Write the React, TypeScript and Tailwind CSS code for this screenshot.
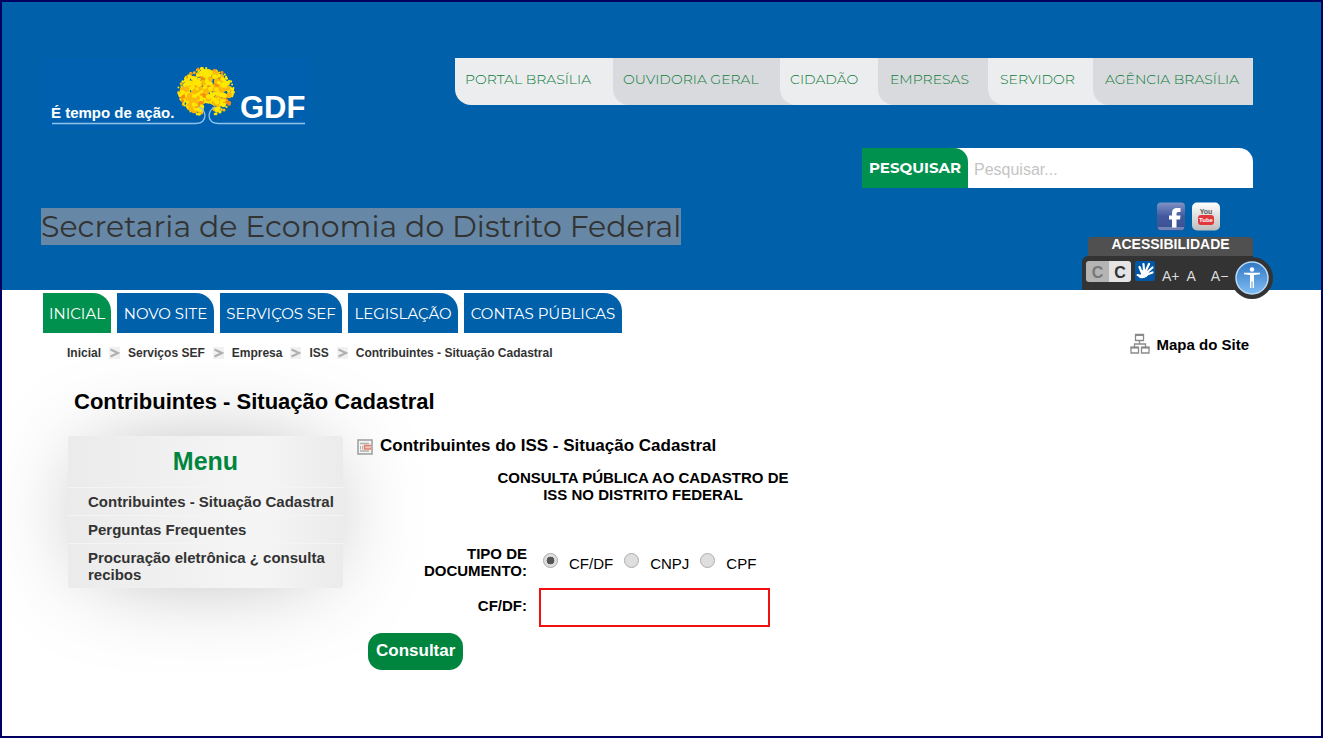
const topLinks = [
  { label: 'PORTAL BRASÍLIA', item: 'grow-[158] bg-transparent', link: 'bg-[#ebedef] pl-[10px] rounded-bl-[16px]' },
  { label: 'OUVIDORIA GERAL', item: 'grow-[167] bg-[#ebedef]', link: 'bg-[#d8dade] pl-[10px] rounded-bl-[16px]' },
  { label: 'CIDADÃO', item: 'grow-[98] bg-[#d8dade]', link: 'bg-[#ebedef] pl-[10px] rounded-bl-[16px]' },
  { label: 'EMPRESAS', item: 'grow-[110] bg-[#ebedef]', link: 'bg-[#d8dade] pl-3 rounded-bl-[16px]' },
  { label: 'SERVIDOR', item: 'grow-[105] bg-[#d8dade]', link: 'bg-[#ebedef] pl-3 rounded-bl-[16px]' },
  { label: 'AGÊNCIA BRASÍLIA', item: 'grow-[160] bg-[#ebedef]', link: 'bg-[#d8dade] pl-3 rounded-bl-[16px]' },
];

const tabs = [
  { label: 'INICIAL', className: 'w-[68px] bg-[#00914e]' },
  { label: 'NOVO SITE', className: 'w-[97px] bg-[#0060aa]' },
  { label: 'SERVIÇOS SEF', className: 'w-[122px] bg-[#0060aa]' },
  { label: 'LEGISLAÇÃO', className: 'w-[110px] bg-[#0060aa]' },
  { label: 'CONTAS PÚBLICAS', className: 'w-[158px] bg-[#0060aa]' },
];

const crumbs = ['Inicial', 'Serviços SEF', 'Empresa', 'ISS', 'Contribuintes - Situação Cadastral'];

const menuItems = [
  'Contribuintes - Situação Cadastral',
  'Perguntas Frequentes',
  'Procuração eletrônica ¿ consulta recibos',
];

const docTypes = ['CF/DF', 'CNPJ', 'CPF'];

// repeatable noise in 0..1
const noise = (n: number) => {
  const s = Math.sin(n * 12.9898) * 43758.5453;
  return s - Math.floor(s);
};

// blossoms of the tree, scattered over the crown
const blossoms = Array.from({ length: 420 }, (_, i) => {
  const angle = noise(i + 1) * Math.PI * 2;
  const dist = Math.sqrt(noise(i * 1.7 + 500));
  const tone = noise(i * 2.3 + 900);
  return {
    x: 163 + Math.cos(angle) * dist * 28,
    y: 34 + Math.sin(angle) * dist * 24,
    r: dist > 0.88 ? 0.9 + tone * 0.7 : 1.6 + tone * 1.2,
    fill: tone > 0.92 ? '#f78a10' : tone > 0.74 ? '#fbb80c' : '#ffe800',
  };
}).filter((b) => !(Math.abs(b.x - 165) < 6 && b.y > 45));

function Logo() {
  return (
    <svg width="266" height="74" viewBox="0 0 266 74" role="img" aria-label="É tempo de ação. GDF">
      <rect width="266" height="72" fill="#0060b0" />
      <g fill="#fff" fontFamily="'Liberation Sans', Arial, sans-serif" fontWeight="700">
        <text x="8" y="60" fontSize="15">É tempo de ação.</text>
        <text x="197" y="60" fontSize="31">GDF</text>
      </g>
      {blossoms.map((b, i) => (
        <circle key={i} cx={b.x} cy={b.y} r={b.r} fill={b.fill} />
      ))}
      <g fill="none" stroke="#8fc3ea" strokeWidth="1.3">
        <path d="M9 65.500H153Q162 65 162 57Q161 51 156 49" />
        <path d="M262 65.500H175Q166 65 166 57Q167 51 172 49" />
      </g>
    </svg>
  );
}

function FacebookIcon() {
  return (
    <svg width="28" height="29" viewBox="0 0 28 29" aria-hidden="true">
      <defs>
        <linearGradient id="fb" x1="0" y1="0" x2="0" y2="1">
          <stop offset="0" stopColor="#7f93c6" />
          <stop offset="0.5" stopColor="#41599f" />
          <stop offset="1" stopColor="#3a5091" />
        </linearGradient>
      </defs>
      <rect y="0.500" width="28" height="28" rx="4" fill="url(#fb)" />
      <path d="M15 26V17.500H12V13.500H15V11Q15 6 20 6H23.500V10H21Q19.500 10 19.500 11.500V13.500H23.500L23 17.500H19.500V26Z" fill="#fff" />
      <path d="M1 25H27V26.500Q26 28 24 28H4Q2 28 1 26.500Z" fill="#93a5d0" opacity="0.6" />
    </svg>
  );
}

function YoutubeIcon() {
  return (
    <svg width="28" height="29" viewBox="0 0 28 29" aria-hidden="true">
      <defs>
        <linearGradient id="yt" x1="0" y1="0" x2="0" y2="1">
          <stop offset="0" stopColor="#fff" />
          <stop offset="1" stopColor="#bdbdbd" />
        </linearGradient>
      </defs>
      <rect y="0.500" width="28" height="28" rx="5" fill="url(#yt)" />
      <rect x="6" y="13" width="16" height="10" rx="3" fill="#e0383c" />
      <g fontFamily="'Liberation Sans', Arial, sans-serif" fontWeight="700" textAnchor="middle">
        <text x="14" y="12" fontSize="7" fill="#555">You</text>
        <text x="14" y="20" fontSize="6" fill="#fff">Tube</text>
      </g>
    </svg>
  );
}

function HandsIcon() {
  return (
    <svg width="20" height="20" viewBox="0 0 20 20" aria-hidden="true">
      <rect width="20" height="20" rx="2" fill="#0057a8" />
      <g stroke="#fff" strokeLinecap="round" fill="none">
        <path d="M6.500 11L4.500 6M9 9.500L8.500 3M11 9.500L14 3M12 11.500L17.500 6.500M12 13.500L17.500 11.500" strokeWidth="2.2" />
        <path d="M2.500 14L7 15" strokeWidth="2" />
      </g>
      <path d="M6 10Q10 7.500 13 10.500Q14.500 13 12 15.500Q9 18 5 17L3 15.500L6 13.500Z" fill="#fff" />
    </svg>
  );
}

function AccessIcon() {
  return (
    <svg width="42" height="42" viewBox="0 0 42 42" aria-hidden="true">
      <defs>
        <linearGradient id="acc" x1="0" y1="0" x2="0" y2="1">
          <stop offset="0" stopColor="#2f78c4" />
          <stop offset="1" stopColor="#7fbcf2" />
        </linearGradient>
      </defs>
      <circle cx="21" cy="21" r="21" fill="#333" />
      <circle cx="21" cy="21" r="16" fill="url(#acc)" stroke="#b9daf5" strokeWidth="1.5" />
      <circle cx="21" cy="12.500" r="2.200" fill="#fff" />
      <path d="M13 15.800H29V17.200L23 18V31H21.600V24.500H20.400V31H19V18L13 17.200Z" fill="#fff" />
    </svg>
  );
}

function SitemapIcon() {
  return (
    <svg width="20" height="21" viewBox="0 0 20 21" fill="none" stroke="#8a8a8a" className="-mt-1" aria-hidden="true">
      <path d="M5.500 1.500H13.500V7.500H5.500ZM1 14.500H8.500V20H1ZM11.500 14.500H19V20H11.500Z" strokeWidth="1.3" />
      <path d="M5 2H14M0.500 14.500H9M11 14.500H19.500" strokeWidth="2" />
      <path d="M9.500 7.500V11M4.500 14V11H15.500V14" strokeWidth="1.3" />
    </svg>
  );
}

function FormIcon() {
  return (
    <svg width="16" height="16" viewBox="0 0 16 16" fill="none" className="mt-[2px]" aria-hidden="true">
      <rect x="1" y="1" width="14" height="14" fill="#f4f4f4" stroke="#9c9c9c" strokeWidth="1.500" />
      <path d="M3 4.500H12M3 12H12" stroke="#b0b0b0" strokeWidth="1.500" />
      <path d="M3.500 7V10.500M5.500 7V10.500" stroke="#b0b0b0" />
      <path d="M14 6.500H7.500V10H14" fill="#f3c4b8" stroke="#e0806a" strokeWidth="1.500" />
    </svg>
  );
}

function Chevron() {
  return (
    <svg width="11" height="12" viewBox="0 0 11 12" className="bg-[#f1f1f1]" aria-hidden="true">
      <path d="M1.500 2.500L9 6L1.500 9.500" fill="none" stroke="#b0b0b0" strokeWidth="2" />
    </svg>
  );
}

function TopNav() {
  return (
    <nav className="w-[798px]" aria-label="Portais">
      <ul className="flex">
        {topLinks.map((l) => (
          <li key={l.label} className={`basis-0 ${l.item}`}>
            <a
              href="#"
              className={`block h-[47px] whitespace-nowrap font-['Montserrat','Inter',sans-serif] text-sm font-light leading-[42px] text-[#0f7a3a] ${l.link}`}
            >
              {l.label}
            </a>
          </li>
        ))}
      </ul>
    </nav>
  );
}

function Accessibility() {
  return (
    <section className="relative mt-[6px] w-[171px]" aria-label="Acessibilidade">
      <h2 className="ml-[6px] h-[19px] rounded-t-[4px] bg-[#505050] text-center text-sm font-bold leading-[14px] text-white">
        ACESSIBILIDADE
      </h2>
      <div className="flex h-[34px] items-center rounded-tl-[6px] bg-[#333] pb-1 pl-1 text-[#ddd]">
        <button type="button" aria-label="Baixo contraste" className="h-[21px] w-[23px] rounded-l-[3px] bg-[#b4b4b4] font-bold text-[#777]">C</button>
        <button type="button" aria-label="Alto contraste" className="h-[21px] w-[22px] rounded-r-[3px] bg-[#e4e4e4] font-bold text-[#333]">C</button>
        <button type="button" aria-label="Libras" className="ml-1"><HandsIcon /></button>
        <button type="button" className="ml-[7px] pt-[10px] text-sm">A+</button>
        <button type="button" className="ml-[7px] pt-[10px] text-sm">A</button>
        <button type="button" className="ml-[15px] pt-[10px] text-sm">A−</button>
      </div>
      <div className="absolute -right-5 top-5">
        <AccessIcon />
      </div>
    </section>
  );
}

function Header() {
  return (
    <header className="relative z-10 bg-[#0060aa] pl-[39px] pr-[68px] pt-14">
      <div className="flex items-start justify-between">
        <div className="pl-[2px]">
          <Logo />
        </div>
        <TopNav />
      </div>

      <div className="mt-4 flex items-start justify-between">
        <h1 className="mt-[60px] whitespace-nowrap bg-[#6688a6] font-['Montserrat','Inter',sans-serif] text-[30px] leading-[37px] text-[#333]">
          Secretaria de Economia do Distrito Federal
        </h1>

        <div className="flex flex-col items-end">
          <form className="flex h-10 w-[391px] rounded-tr-[14px] bg-white">
            <button
              type="button"
              className="w-[106px] rounded-tr-[14px] bg-[#00914e] font-['Montserrat','Inter',sans-serif] text-[15px] font-bold text-white"
            >
              PESQUISAR
            </button>
            <input
              type="text"
              aria-label="Pesquisar"
              placeholder="Pesquisar..."
              className="min-w-0 flex-1 px-[6px] pt-[3px] text-base outline-none placeholder:text-[#c4c4c4]"
            />
          </form>

          <div className="mt-[14px] flex gap-[7px] pr-[33px]">
            <a href="#" aria-label="Facebook"><FacebookIcon /></a>
            <a href="#" aria-label="YouTube"><YoutubeIcon /></a>
          </div>

          <Accessibility />
        </div>
      </div>
    </header>
  );
}

function SideMenu() {
  return (
    <nav
      aria-label="Menu"
      className="w-[275px] shrink-0 self-start rounded-[3px] bg-linear-to-r from-[#ebebeb] via-[#f5f5f5] via-70% to-[#ebebeb] shadow-[0_0_100px_-25px_rgba(0,0,0,0.38)]"
    >
      <h2 className="text-center text-[25px] font-bold leading-[51px] text-[#00853f]">Menu</h2>
      <ul>
        {menuItems.map((item) => (
          <li key={item} className="border-t border-[#f4f4f4]">
            <a href="#" className="block py-[5px] pl-5 pr-[6px] text-[15px] font-bold leading-[17px] text-[#333]">
              {item}
            </a>
          </li>
        ))}
      </ul>
    </nav>
  );
}

function ConsultaForm() {
  return (
    <section className="relative min-w-0 flex-1">
      <h2 className="flex items-center gap-[7px] text-[17px] font-bold leading-5">
        <FormIcon />
        Contribuintes do ISS - Situação Cadastral
      </h2>

      <form className="ml-[11px] mt-[13px] max-w-[550px]">
        <p className="mx-auto max-w-[300px] text-center text-[15px] font-bold leading-[17px]">
          CONSULTA PÚBLICA AO CADASTRO DE ISS NO DISTRITO FEDERAL
        </p>

        <div className="mt-[42px] grid grid-cols-[159px_1fr] gap-x-3 gap-y-[9px]">
          <span id="tipo" className="ml-auto max-w-[120px] text-right text-[15px] font-bold leading-[17px]">
            TIPO DE DOCUMENTO:
          </span>
          <div role="radiogroup" aria-labelledby="tipo" className="flex items-center pl-1 text-[15px]">
            {docTypes.map((type, i) => (
              <label key={type} className="mr-[11px] flex items-center gap-[11px] leading-[17px]">
                <input
                  type="radio"
                  name="tipoDocumento"
                  value={type}
                  defaultChecked={i === 0}
                  className="mb-1 h-[15px] w-[15px] appearance-none rounded-full border border-[#adadad] bg-[#dedede] checked:bg-radial checked:from-[#555] checked:from-40% checked:to-[#dedede] checked:to-45%"
                />
                <span className="pt-[2px]">{type}</span>
              </label>
            ))}
          </div>

          <label htmlFor="cfdf" className="text-right text-[15px] font-bold leading-[36px]">CF/DF:</label>
          <input id="cfdf" type="text" className="h-[39px] w-[231px] border-2 border-[#f01010] px-2 outline-none" />
        </div>

        <button
          type="button"
          className="mt-[6px] h-[37px] rounded-[14px] bg-[#00853f] px-2 pb-[2px] text-[17px] font-bold text-white"
        >
          Consultar
        </button>
      </form>
    </section>
  );
}

export default function App() {
  return (
    <div className="min-h-screen border-2 border-[#000060] bg-white font-['Liberation_Sans',Arial,sans-serif] text-black">
      <Header />

      <nav className="pl-[41px] pt-[3px]" aria-label="Principal">
        <ul className="flex gap-[6px]">
          {tabs.map((tab) => (
            <li key={tab.label}>
              <a
                href="#"
                className={`block h-10 whitespace-nowrap rounded-tr-[18px] text-center font-['Montserrat','Inter',sans-serif] text-[15px] leading-[41px] text-white ${tab.className}`}
              >
                {tab.label}
              </a>
            </li>
          ))}
        </ul>
      </nav>

      <div className="flex items-start justify-between pl-[65px] pr-[72px]">
        <ol className="flex items-center pt-[10px] text-xs font-bold leading-5 text-[#333]">
          {crumbs.map((crumb, i) => (
            <li key={crumb} className="flex items-center">
              {i > 0 && <span className="mx-2"><Chevron /></span>}
              <a href="#">{crumb}</a>
            </li>
          ))}
        </ol>
        <a href="#" className="flex items-center gap-[6px] text-[15px] font-bold leading-6">
          <SitemapIcon />
          Mapa do Site
        </a>
      </div>

      <main className="pl-[66px] pr-[72px]">
        <h1 className="relative z-10 mt-[25px] pl-[6px] text-[22px] font-bold leading-7">
          Contribuintes - Situação Cadastral
        </h1>
        <div className="mt-5 flex gap-[14px]">
          <SideMenu />
          <ConsultaForm />
        </div>
      </main>
    </div>
  );
}
